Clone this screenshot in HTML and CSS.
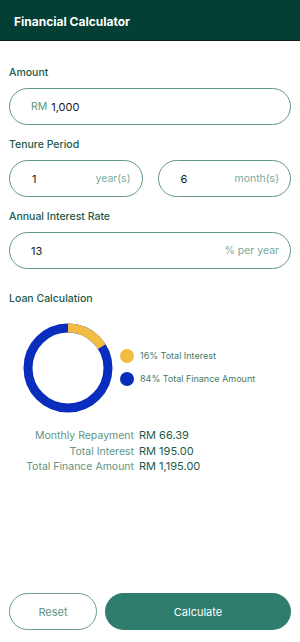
FILE: index.html
```html
<!DOCTYPE html>
<html lang="en">
<head>
    <meta charset="UTF-8">
    <meta name="viewport" content="width=device-width, initial-scale=1.0">
    <title>Financial Calculator</title>
    <link rel="stylesheet" href="styles.css">
</head>
<body>
    <header class="topbar">Financial Calculator</header>

    <main class="content">
        <div class="form-group">
            <label class="field-label">Amount</label>
            <div class="pill">
                <span class="prefix">RM</span>
                <span class="value">1,000</span>
            </div>
        </div>

        <div class="form-group">
            <label class="field-label">Tenure Period</label>
            <div class="pill-row">
                <div class="pill">
                    <span class="value">1</span>
                    <span class="unit">year(s)</span>
                </div>
                <div class="pill">
                    <span class="value">6</span>
                    <span class="unit">month(s)</span>
                </div>
            </div>
        </div>

        <div class="form-group">
            <label class="field-label">Annual Interest Rate</label>
            <div class="pill">
                <span class="value">13</span>
                <span class="unit">% per year</span>
            </div>
        </div>

        <h2 class="section-title">Loan Calculation</h2>

        <div class="chart">
            <svg class="donut" width="90" height="90" viewBox="0 0 90 90">
                <circle cx="45" cy="45" r="40" fill="none" stroke="#0a2dbd" stroke-width="9"/>
                <circle cx="45" cy="45" r="40" fill="none" stroke="#f2bd42" stroke-width="9"
                        stroke-dasharray="40.2 251.3" transform="rotate(-90 45 45)"/>
            </svg>
            <ul class="legend">
                <li><span class="dot interest"></span>16% Total Interest</li>
                <li><span class="dot finance"></span>84% Total Finance Amount</li>
            </ul>
        </div>

        <div class="summary">
            <span class="summary-label">Monthly Repayment</span>
            <span class="summary-value">RM 66.39</span>
            <span class="summary-label">Total Interest</span>
            <span class="summary-value">RM 195.00</span>
            <span class="summary-label">Total Finance Amount</span>
            <span class="summary-value">RM 1,195.00</span>
        </div>
    </main>

    <footer class="actions">
        <button class="btn btn-outline">Reset</button>
        <button class="btn btn-primary">Calculate</button>
    </footer>
</body>
</html>
```

FILE: styles.css
```css
* {
    box-sizing: border-box;
    margin: 0;
    padding: 0;
    font-family: Inter, "Noto Sans", sans-serif;
}

html, body {
    height: 100%;
}

body {
    background-color: #fff;
    display: flex;
    flex-direction: column;
    min-height: 100vh;
}

.topbar {
    height: 41px;
    background-color: #033f34;
    border-bottom: 1px solid #0c1d18;
    color: #fff;
    font-size: 12px;
    font-weight: 700;
    padding: 3px 0 0 14px;
    display: flex;
    align-items: center;
}

.content {
    padding: 0 9px;
}

.form-group {
    margin-top: 25px;
}

.form-group + .form-group {
    margin-top: 13px;
}

.field-label {
    display: block;
    font-size: 10.5px;
    font-weight: 500;
    line-height: 14px;
    color: #1d5a49;
    margin-bottom: 8px;
}

.pill {
    height: 37px;
    border: 1px solid #5f9886;
    border-radius: 19px;
    display: flex;
    align-items: center;
    padding: 0 11px 0 21px;
    font-size: 11px;
}

.pill-row {
    display: flex;
    gap: 15px;
}

.pill-row .pill {
    flex: 1;
    padding-left: 22px;
}

.prefix {
    font-size: 10.5px;
    color: #5f9484;
    margin-right: 4px;
}

.value {
    color: #1a1a1a;
}

.unit {
    margin-left: auto;
    font-size: 10.5px;
    color: #7aab9c;
}

.section-title {
    font-size: 10.5px;
    font-weight: 500;
    line-height: 14px;
    color: #1d5a49;
    margin-top: 23px;
}

.chart {
    display: flex;
    align-items: center;
    gap: 7px;
    margin-top: 17px;
    padding-left: 14px;
}

.donut {
    display: block;
}

.legend {
    list-style: none;
    display: flex;
    flex-direction: column;
    gap: 9px;
    margin-top: -2px;
}

.legend li {
    display: flex;
    align-items: center;
    gap: 6px;
    font-size: 9px;
    line-height: 14px;
    color: #3f7a69;
}

.dot {
    width: 14px;
    height: 14px;
    border-radius: 50%;
}

.dot.interest {
    background-color: #f2bd42;
}

.dot.finance {
    background-color: #0a2dbd;
}

.summary {
    display: grid;
    grid-template-columns: 125px auto;
    column-gap: 5px;
    margin-top: 15px;
    font-size: 10.5px;
    line-height: 15.5px;
}

.summary-label {
    text-align: right;
    color: #5f9484;
}

.summary-value {
    color: #1d5a49;
    font-size: 11px;
}

.actions {
    margin-top: auto;
    display: flex;
    gap: 8px;
    padding: 0 9px 12px;
}

.btn {
    height: 37px;
    border-radius: 19px;
    font-size: 11px;
    cursor: pointer;
}

.btn-outline {
    flex: 0 0 88px;
    background-color: #fff;
    border: 1px solid #6a9d8e;
    color: #5f9484;
}

.btn-primary {
    flex: 1;
    background-color: #2e7d6d;
    border: none;
    color: #fff;
}
```
